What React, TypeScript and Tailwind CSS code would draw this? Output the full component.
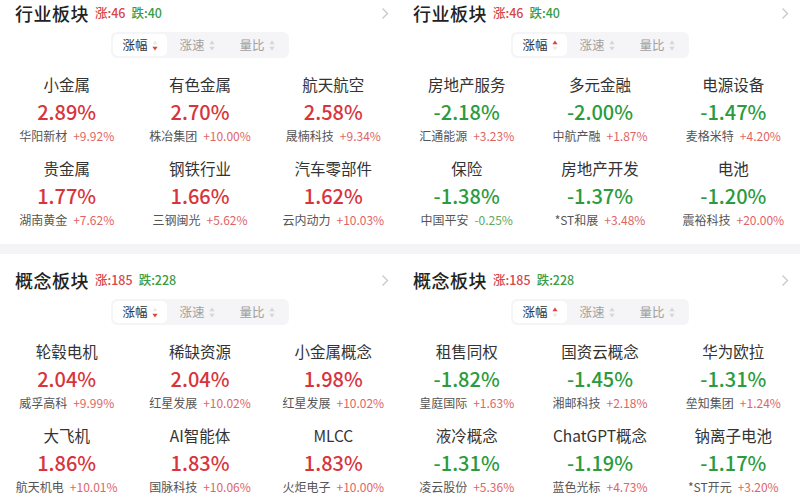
type Item = { name: string; pct: string; stock: string; stockPct: string };

type PanelProps = {
  title: string;
  up: number;
  down: number;
  asc?: boolean;
  items: Item[];
  padLeft: string;
};

const RED = 'text-[#d8343c]';
const GREEN = 'text-[#2b9b3d]';

function SortIcon({ state }: { state: 'none' | 'down' | 'up' }) {
  const upFill = state === 'up' ? '#e0443c' : '#d6d6d6';
  const downFill = state === 'down' ? '#e0443c' : '#d6d6d6';
  return (
    <svg width="6" height="11" viewBox="0 0 6 11" className="ml-[4px]">
      <path d="M3 0.5 L5.6 4.3 L0.4 4.3 Z" fill={upFill} opacity={state === 'down' ? 0.5 : 1} />
      <path d="M3 10.5 L5.6 6.7 L0.4 6.7 Z" fill={downFill} opacity={state === 'up' ? 0.5 : 1} />
    </svg>
  );
}

function Panel({ title, up, down, asc, items, padLeft }: PanelProps) {
  return (
    <div className="w-[400px] flex flex-col">
      <div className={`flex items-center h-[26px] pr-[11px] ${padLeft}`}>
        <span className="text-[18px] font-medium text-[#222222] tracking-[0.5px]">{title}</span>
        <span className="ml-[6px] text-[12.5px] font-medium text-[#d8454a]">涨:{up}</span>
        <span className="ml-[6px] text-[12.5px] font-medium text-[#3a9d45]">跌:{down}</span>
        <svg width="8" height="13" viewBox="0 0 8 13" className="ml-auto">
          <path d="M1.5 1.5 L6.5 6.5 L1.5 11.5" fill="none" stroke="#c8c8c8" strokeWidth="1.3" />
        </svg>
      </div>

      <div className="flex justify-center mt-[6px]">
        <div className="flex bg-[#f5f5f7] rounded-[6px] p-[2px]">
          <div className="flex items-center justify-center w-[54px] h-[22px] bg-white rounded-[5px] text-[12.5px] text-[#333333]">
            涨幅
            <SortIcon state={asc ? 'up' : 'down'} />
          </div>
          <div className="flex items-center justify-center w-[60px] h-[22px] text-[12.5px] text-[#a0a0a0]">
            涨速
            <SortIcon state="none" />
          </div>
          <div className="flex items-center justify-center w-[60px] h-[22px] text-[12.5px] text-[#a0a0a0]">
            量比
            <SortIcon state="none" />
          </div>
        </div>
      </div>

      <div className="grid grid-cols-3 gap-y-[15px] mt-[17px]">
        {items.map((it) => {
          const neg = it.pct.startsWith('-');
          const stockNeg = it.stockPct.startsWith('-');
          return (
            <div key={it.name + it.stock} className="flex flex-col items-center">
              <div className="h-[20px] flex items-center text-[15.5px] text-[#333333] whitespace-nowrap">
                {it.name}
              </div>
              <div
                className={`mt-[4px] h-[26px] flex items-center text-[20px] font-medium ${neg ? GREEN : RED}`}
              >
                {it.pct}
              </div>
              <div className="mt-[3px] h-[16px] flex items-center text-[12px] whitespace-nowrap">
                <span className="text-[#555555]">{it.stock}</span>
                <span className={`ml-[6px] ${stockNeg ? 'text-[#5aaa62]' : 'text-[#e06466]'}`}>
                  {it.stockPct}
                </span>
              </div>
            </div>
          );
        })}
      </div>
    </div>
  );
}

const industryUp: Item[] = [
  { name: '小金属', pct: '2.89%', stock: '华阳新材', stockPct: '+9.92%' },
  { name: '有色金属', pct: '2.70%', stock: '株冶集团', stockPct: '+10.00%' },
  { name: '航天航空', pct: '2.58%', stock: '晟楠科技', stockPct: '+9.34%' },
  { name: '贵金属', pct: '1.77%', stock: '湖南黄金', stockPct: '+7.62%' },
  { name: '钢铁行业', pct: '1.66%', stock: '三钢闽光', stockPct: '+5.62%' },
  { name: '汽车零部件', pct: '1.62%', stock: '云内动力', stockPct: '+10.03%' },
];

const industryDown: Item[] = [
  { name: '房地产服务', pct: '-2.18%', stock: '汇通能源', stockPct: '+3.23%' },
  { name: '多元金融', pct: '-2.00%', stock: '中航产融', stockPct: '+1.87%' },
  { name: '电源设备', pct: '-1.47%', stock: '麦格米特', stockPct: '+4.20%' },
  { name: '保险', pct: '-1.38%', stock: '中国平安', stockPct: '-0.25%' },
  { name: '房地产开发', pct: '-1.37%', stock: '*ST和展', stockPct: '+3.48%' },
  { name: '电池', pct: '-1.20%', stock: '震裕科技', stockPct: '+20.00%' },
];

const conceptUp: Item[] = [
  { name: '轮毂电机', pct: '2.04%', stock: '威孚高科', stockPct: '+9.99%' },
  { name: '稀缺资源', pct: '2.04%', stock: '红星发展', stockPct: '+10.02%' },
  { name: '小金属概念', pct: '1.98%', stock: '红星发展', stockPct: '+10.02%' },
  { name: '大飞机', pct: '1.86%', stock: '航天机电', stockPct: '+10.01%' },
  { name: 'AI智能体', pct: '1.83%', stock: '国脉科技', stockPct: '+10.06%' },
  { name: 'MLCC', pct: '1.83%', stock: '火炬电子', stockPct: '+10.00%' },
];

const conceptDown: Item[] = [
  { name: '租售同权', pct: '-1.82%', stock: '皇庭国际', stockPct: '+1.63%' },
  { name: '国资云概念', pct: '-1.45%', stock: '湘邮科技', stockPct: '+2.18%' },
  { name: '华为欧拉', pct: '-1.31%', stock: '垒知集团', stockPct: '+1.24%' },
  { name: '液冷概念', pct: '-1.31%', stock: '凌云股份', stockPct: '+5.36%' },
  { name: 'ChatGPT概念', pct: '-1.19%', stock: '蓝色光标', stockPct: '+4.73%' },
  { name: '钠离子电池', pct: '-1.17%', stock: '*ST开元', stockPct: '+3.20%' },
];

export default function App() {
  return (
    <div
      className="w-[800px] h-[500px] flex flex-col overflow-hidden bg-white"
      style={{ fontFamily: '"Noto Sans CJK SC", "Noto Sans", sans-serif' }}
    >
      <div className="flex h-[244px]">
        <Panel title="行业板块" up={46} down={40} items={industryUp} padLeft="pl-[15px]" />
        <Panel title="行业板块" up={46} down={40} asc items={industryDown} padLeft="pl-[13px]" />
      </div>
      <div className="h-[10px] bg-[#f4f4f6]" />
      <div className="flex flex-1 pt-[13px]">
        <Panel title="概念板块" up={185} down={228} items={conceptUp} padLeft="pl-[15px]" />
        <Panel title="概念板块" up={185} down={228} asc items={conceptDown} padLeft="pl-[13px]" />
      </div>
    </div>
  );
}
